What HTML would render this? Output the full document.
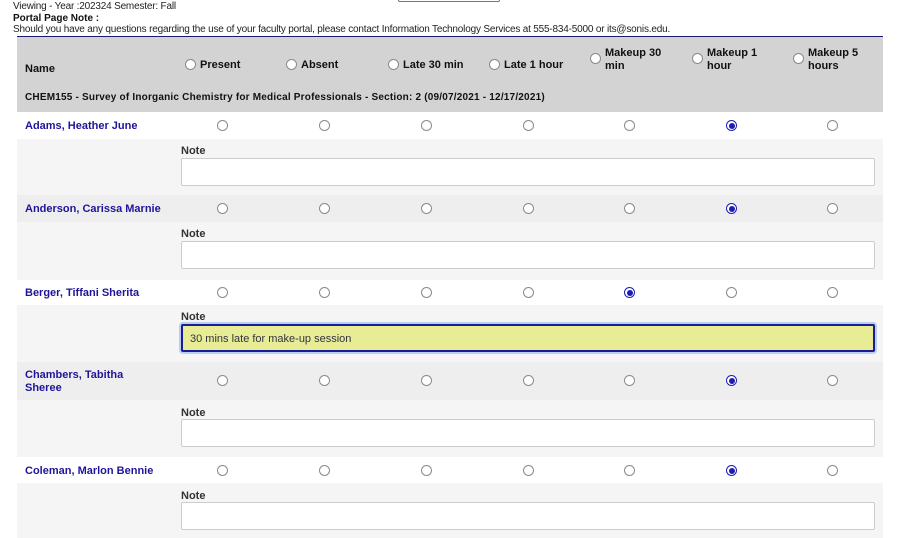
<!DOCTYPE html>
<html><head><meta charset="utf-8"><style>
*{margin:0;padding:0;box-sizing:border-box}
body{width:900px;height:538px;background:#fff;font-family:"Liberation Sans",Arial,sans-serif;position:relative;overflow:hidden;color:#222}
.a{position:absolute;white-space:nowrap}
.t{font-size:10px;color:#222;letter-spacing:-0.19px}
.bg{position:absolute;left:17px;width:866px}
.h{font-size:11px;font-weight:bold;color:#111;line-height:13px}
.nm{font-size:11px;font-weight:bold;color:#20159a;line-height:13px}
.r{position:absolute;width:11px;height:11px;border:1px solid #8a8a8a;border-radius:50%;background:#fff}
.rc{border-color:#1d1db0}
.rc:after{content:"";position:absolute;left:1.5px;top:1.5px;width:6px;height:6px;border-radius:50%;background:#1d1db0}
.lab{font-size:11px;font-weight:bold;color:#333}
.in{position:absolute;left:181px;width:694px;height:28px;background:#fff;border:1px solid #ccc;border-radius:2px}
</style></head><body>
<div class="a" style="left:398px;top:-6px;width:102px;height:8px;border:1px solid #777;border-radius:2px"></div>
<div class="a t" style="left:13px;top:1px">Viewing - Year :202324 Semester: Fall</div>
<div class="a t" style="left:13px;top:13px;font-weight:bold;color:#111;letter-spacing:0">Portal Page Note :</div>
<div class="a t" style="left:13px;top:24px">Should you have any questions regarding the use of your faculty portal, please contact Information Technology Services at 555-834-5000 or its@sonis.edu.</div>
<div class="bg" style="top:36px;height:1px;background:#1a1a70"></div>
<div class="bg" style="top:37px;height:75px;background:#d3d3d3"></div>
<div class="a h" style="left:25px;top:63px">Name</div>
<div class="r" style="left:185px;top:59px"></div><div class="a h" style="left:200px;top:59px">Present</div>
<div class="r" style="left:286px;top:59px"></div><div class="a h" style="left:301px;top:59px">Absent</div>
<div class="r" style="left:388px;top:59px"></div><div class="a h" style="left:403px;top:59px">Late 30 min</div>
<div class="r" style="left:489px;top:59px"></div><div class="a h" style="left:504px;top:59px">Late 1 hour</div>
<div class="r" style="left:590px;top:53px"></div><div class="a h" style="left:605px;top:47px">Makeup 30<br>min</div>
<div class="r" style="left:692px;top:53px"></div><div class="a h" style="left:707px;top:47px">Makeup 1<br>hour</div>
<div class="r" style="left:793px;top:53px"></div><div class="a h" style="left:808px;top:47px">Makeup 5<br>hours</div>
<div class="a" style="left:25px;top:92px;font-size:10px;font-weight:bold;color:#111;letter-spacing:0.2px">CHEM155 - Survey of Inorganic Chemistry for Medical Professionals - Section: 2 (09/07/2021 - 12/17/2021)</div>

<div class="bg" style="top:112px;height:27px;background:#fff"></div>
<div class="bg" style="top:139px;height:56px;background:#f5f5f5"></div>
<div class="bg" style="top:195px;height:27px;background:#eeeeee"></div>
<div class="bg" style="top:222px;height:58px;background:#f5f5f5"></div>
<div class="bg" style="top:280px;height:25px;background:#fff"></div>
<div class="bg" style="top:305px;height:57px;background:#f5f5f5"></div>
<div class="bg" style="top:362px;height:38px;background:#eeeeee"></div>
<div class="bg" style="top:400px;height:57px;background:#f5f5f5"></div>
<div class="bg" style="top:457px;height:26px;background:#fff"></div>
<div class="bg" style="top:483px;height:55px;background:#f5f5f5"></div>

<div class="a nm" style="left:25px;top:120px">Adams, Heather June</div>
<div class="a nm" style="left:25px;top:203px">Anderson, Carissa Marnie</div>
<div class="a nm" style="left:25px;top:287px">Berger, Tiffani Sherita</div>
<div class="a nm" style="left:25px;top:369px">Chambers, Tabitha<br>Sheree</div>
<div class="a nm" style="left:25px;top:465px">Coleman, Marlon Bennie</div>

<div class="a lab" style="left:181px;top:145px">Note</div><div class="in" style="top:158px"></div>
<div class="a lab" style="left:181px;top:228px">Note</div><div class="in" style="top:241px"></div>
<div class="a lab" style="left:181px;top:311px">Note</div>
<div class="in" style="top:324px;background:#e8ec94;border:2px solid #1b1b9a;box-shadow:0 0 0 2px #b8cff0;font-size:11px;color:#334;padding:7px 7px">30 mins late for make-up session</div>
<div class="a lab" style="left:181px;top:407px">Note</div><div class="in" style="top:419px"></div>
<div class="a lab" style="left:181px;top:490px">Note</div><div class="in" style="top:502px"></div>

<div class="r" style="left:217px;top:120px"></div><div class="r" style="left:319px;top:120px"></div><div class="r" style="left:421px;top:120px"></div><div class="r" style="left:523px;top:120px"></div><div class="r" style="left:624px;top:120px"></div><div class="r rc" style="left:726px;top:120px"></div><div class="r" style="left:827px;top:120px"></div>
<div class="r" style="left:217px;top:203px"></div><div class="r" style="left:319px;top:203px"></div><div class="r" style="left:421px;top:203px"></div><div class="r" style="left:523px;top:203px"></div><div class="r" style="left:624px;top:203px"></div><div class="r rc" style="left:726px;top:203px"></div><div class="r" style="left:827px;top:203px"></div>
<div class="r" style="left:217px;top:287px"></div><div class="r" style="left:319px;top:287px"></div><div class="r" style="left:421px;top:287px"></div><div class="r" style="left:523px;top:287px"></div><div class="r rc" style="left:624px;top:287px"></div><div class="r" style="left:726px;top:287px"></div><div class="r" style="left:827px;top:287px"></div>
<div class="r" style="left:217px;top:375px"></div><div class="r" style="left:319px;top:375px"></div><div class="r" style="left:421px;top:375px"></div><div class="r" style="left:523px;top:375px"></div><div class="r" style="left:624px;top:375px"></div><div class="r rc" style="left:726px;top:375px"></div><div class="r" style="left:827px;top:375px"></div>
<div class="r" style="left:217px;top:465px"></div><div class="r" style="left:319px;top:465px"></div><div class="r" style="left:421px;top:465px"></div><div class="r" style="left:523px;top:465px"></div><div class="r" style="left:624px;top:465px"></div><div class="r rc" style="left:726px;top:465px"></div><div class="r" style="left:827px;top:465px"></div>
</body></html>
